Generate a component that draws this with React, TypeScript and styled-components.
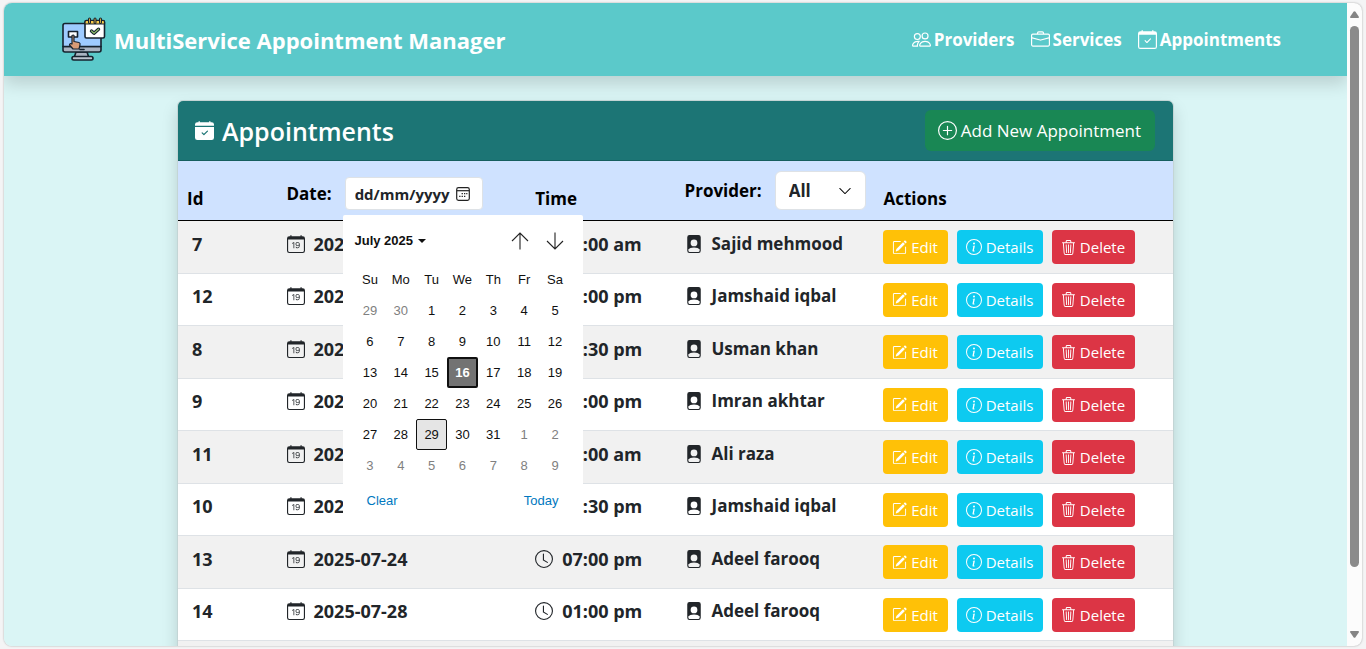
import React, { useState } from 'react';
import styled, { createGlobalStyle, css } from 'styled-components';
import {
  BsPeople,
  BsBriefcase,
  BsCalendarCheck,
  BsCalendarCheckFill,
  BsPlusCircle,
  BsCalendarDate,
  BsClock,
  BsFilePersonFill,
  BsPencilSquare,
  BsInfoCircle,
  BsTrash3,
  BsChevronDown,
} from 'react-icons/bs';

const uiFont = '"Open Sans", "Noto Sans", sans-serif';
const pickerFont = '"Liberation Sans", Arial, sans-serif';

const GlobalStyle = createGlobalStyle`
  *, *::before, *::after { box-sizing: border-box; }
  body {
    margin: 0;
    background: #f4f4f5;
    color: #212529;
    font-family: ${uiFont};
    font-size: 17px;
  }
  button, input, select { font: inherit; margin: 0; }
  a { color: inherit; text-decoration: none; }
`;

const Frame = styled.div`
  height: 100vh;
  padding: 3px 4px;
`;

const Window = styled.div`
  display: flex;
  height: 100%;
  overflow: hidden;
  border-radius: 8px;
  background: #fcfcfc;
  box-shadow: 0 0 2px rgba(0, 0, 0, 0.35);
`;

const Page = styled.div`
  flex: 1;
  min-width: 0;
  overflow-y: auto;
  scrollbar-width: none;
  background: #daf5f5;
`;

const ScrollRail = styled.div`
  display: flex;
  flex-direction: column;
  align-items: center;
  gap: 8px;
  width: 15px;
  padding: 8px 0;
`;

const ScrollThumb = styled.div`
  flex: 1;
  width: 9px;
  margin-bottom: 56px;
  border-radius: 5px;
  background: #8b8b8b;
`;

const Navbar = styled.header`
  display: flex;
  align-items: center;
  justify-content: space-between;
  height: 73px;
  padding: 0 66px 0 54px;
  background: #5bc9ca;
  color: #fff;
  box-shadow: 0 8px 16px rgba(0, 0, 0, 0.15);
`;

const Brand = styled.a`
  display: flex;
  align-items: center;
  gap: 8px;
  font-size: 22px;
  font-weight: 700;
`;

const Nav = styled.nav`
  display: flex;
  gap: 16px;
`;

const NavLink = styled.a`
  display: flex;
  align-items: center;
  gap: 3px;
  font-size: 17px;
  font-weight: 700;
  line-height: 24px;
`;

const Card = styled.main`
  width: 100%;
  max-width: 997px;
  margin: 24px auto;
  border: 1px solid #c3d5d5;
  border-radius: 6px;
  background: #fff;
  box-shadow: 0 8px 16px rgba(0, 0, 0, 0.15);
`;

const CardHeader = styled.div`
  display: flex;
  align-items: center;
  justify-content: space-between;
  height: 60px;
  padding: 0 18px 0 17px;
  border-bottom: 1px solid #165e5e;
  border-radius: 5px 5px 0 0;
  background: #1c7575;
  color: #fff;
`;

const CardTitle = styled.h1`
  display: flex;
  align-items: center;
  gap: 8px;
  margin: 0;
  font-size: 25px;
  font-weight: 600;
`;

const AddButton = styled.button`
  display: flex;
  align-items: center;
  gap: 4px;
  height: 41px;
  padding: 0 14px 0 13px;
  border: 0;
  border-radius: 6px;
  background: #198754;
  color: #fff;
  font-size: 17px;
`;

const Table = styled.table`
  width: 100%;
  table-layout: fixed;
  border-collapse: separate;
  border-spacing: 0;
`;

const HeadCell = styled.th<{ $width: number }>`
  width: ${(p) => p.$width}%;
  height: 60px;
  padding: 8px 8px 8px 9px;
  border-bottom: 1px solid #000;
  background: #cfe2ff;
  color: #000;
  font-weight: 700;
  line-height: 26px;
  text-align: left;
  vertical-align: bottom;
`;

const Filter = styled.div`
  position: relative;
  display: flex;
  align-items: center;
  gap: 13px;
  margin-bottom: 2px;
`;

const DateBox = styled.div`
  display: flex;
  align-items: center;
  width: 138px;
  height: 33px;
  padding: 0 12px 0 9px;
  border: 1px solid #dee2e6;
  border-radius: 4px;
  background: #fff;
`;

const DateInput = styled.input`
  width: 100%;
  min-width: 0;
  padding: 0;
  border: 0;
  outline: 0;
  background: transparent;
  font-size: 15px;
  font-weight: 700;
  &::placeholder { color: #212529; opacity: 1; }
`;

const PlainButton = styled.button`
  display: flex;
  align-items: center;
  justify-content: center;
  padding: 0;
  border: 0;
  background: transparent;
  color: inherit;
`;

const SelectBox = styled.div`
  position: relative;
  display: flex;
  svg {
    position: absolute;
    top: 13px;
    right: 14px;
    pointer-events: none;
  }
`;

const Select = styled.select`
  width: 91px;
  height: 39px;
  padding: 0 32px 0 13px;
  border: 1px solid #dee2e6;
  border-radius: 6px;
  appearance: none;
  background: #fff;
  color: #212529;
  font-weight: 700;
`;

const Row = styled.tr`
  height: 53px;
  &:nth-child(odd) { background: #f1f1f1; }
  &:nth-child(even) { height: 52px; }
`;

const Cell = styled.td`
  padding: 0 8px 7px 9px;
  border-bottom: 1px solid #dee2e6;
  font-weight: 700;
  white-space: nowrap;
`;

const NumberCell = styled(Cell)`
  font-size: 18px;
`;

const IdCell = styled(NumberCell)`
  padding-left: 14px;
`;

const ActionCell = styled(Cell)`
  padding: 0 8px;
`;

const FootCell = styled.td`
  height: 24px;
  padding: 0;
  background: #f1f1f1;
`;

const IconText = styled.span`
  display: flex;
  align-items: center;
  gap: 9px;
  line-height: 24px;
  svg { flex: none; }
`;

const Actions = styled.div`
  display: flex;
  gap: 9px;
`;

const tones = { edit: '#ffc107', details: '#0dcaf0', remove: '#dc3545' };

const ActionButton = styled.button<{ $tone: keyof typeof tones; $width: number }>`
  display: flex;
  align-items: center;
  justify-content: center;
  gap: 4px;
  width: ${(p) => p.$width}px;
  height: 34px;
  padding: 0;
  border: 0;
  border-radius: 4px;
  background: ${(p) => tones[p.$tone]};
  color: #fff;
  font-size: 15px;
  font-weight: 400;
`;

const Picker = styled.div`
  position: absolute;
  z-index: 2;
  top: 100%;
  left: 56px;
  width: 240px;
  height: 312px;
  margin-top: 5px;
  padding: 8px 12px;
  border-radius: 2px;
  background: #fff;
  color: #101010;
  font-family: ${pickerFont};
  font-size: 13px;
  font-weight: 400;
  line-height: 16px;
`;

const PickerHead = styled.div`
  display: flex;
  align-items: center;
  justify-content: space-between;
  height: 36px;
`;

const MonthButton = styled(PlainButton)`
  gap: 5px;
  font-weight: 700;
`;

const Arrows = styled.div`
  display: flex;
  gap: 17px;
  padding-right: 7px;
`;

const DayTable = styled.table`
  width: 100%;
  margin-top: 5px;
  table-layout: fixed;
  border-collapse: collapse;
`;

const WeekDay = styled.th`
  height: 31px;
  padding: 0;
  font-weight: 400;
  text-align: center;
`;

const DayCell = styled.td`
  height: 31px;
  padding: 0;
`;

const Day = styled(PlainButton)<{ $muted?: boolean; $state?: string }>`
  width: 100%;
  height: 31px;
  border-radius: 2px;
  color: ${(p) => (p.$muted ? '#808080' : '#101010')};
  ${(p) =>
    p.$state === 'today' &&
    css`
      border: 2px solid #101010;
      background: #737373;
      color: #fff;
      font-weight: 700;
    `}
  ${(p) =>
    p.$state === 'focused' &&
    css`
      border: 1px solid #101010;
      background: #e5e5e5;
    `}
`;

const PickerFoot = styled.div`
  display: flex;
  justify-content: space-between;
  padding: 12px;
  color: #0078c0;
`;

function Logo() {
  return (
    <svg width="48" height="48" viewBox="0 3 48 48" fill="none" stroke="#16222e" strokeWidth="1.6" strokeLinejoin="round" strokeLinecap="round" aria-hidden="true">
      <path d="M18 39h11l2 6H16z" fill="#aab4c2" />
      <rect x="14" y="43.500" width="21" height="3.500" rx="1.700" fill="#bcc4cf" />
      <path d="M5 33.500h38v3.500q0 2-2 2H7q-2 0-2-2z" fill="#aab4c2" />
      <path d="M5 33.500v-21q0-2 2-2h34q2 0 2 2v21z" fill="#9ecbff" />
      <path d="M22 36.500h4" />
      <path d="M10.500 18.500h9v5.500h-9z" fill="#fff" />
      <path d="M14 22.500q1.500-1 2 0v6l5 1q1.500.5 1 2.500l-1 4h-6l-3.500-4q0-2 2.500-1z" fill="#d99b76" strokeWidth="1.200" />
      <rect x="27" y="7.500" width="19.500" height="17.500" rx="1.500" fill="#fff" />
      <path d="M27 11V9q0-1.500 1.500-1.500h16.500q1.500 0 1.500 1.500v2z" fill="#f7c94b" strokeWidth="1.200" />
      <path d="M31.500 6v3.500M37 6v3.500M42.500 6v3.500" strokeWidth="3" />
      <path d="M31.500 6v3.500M37 6v3.500M42.500 6v3.500" stroke="#f7c94b" strokeWidth="0.800" />
      <path d="M33.500 18l2.500 2.200 4.500-4" strokeWidth="3.400" />
      <path d="M33.500 18l2.500 2.200 4.500-4" stroke="#8dbb6b" strokeWidth="1.200" />
    </svg>
  );
}

function ScrollArrow({ down }: { down?: boolean }) {
  return (
    <svg width="9" height="7" viewBox="0 0 9 7" fill="#858585" aria-hidden="true">
      <path d={down ? 'M1 0h7q1.500.2.700 1.500L5.500 6.200q-1 1.200-2 0L.3 1.500Q-.5.200 1 0z' : 'M1 7h7q1.500-.2.700-1.500L5.500.800q-1-1.200-2 0L.3 5.500Q-.5 6.800 1 7z'} />
    </svg>
  );
}

function PickerIcon() {
  return (
    <svg width="14" height="14" viewBox="0 0 14 14" fill="none" stroke="#222" strokeWidth="1.200" aria-hidden="true">
      <rect x="0.700" y="0.700" width="12.600" height="12.600" rx="1.800" />
      <path d="M1 3.700h12" />
      <path d="M5.600 6.600h1.300M8 6.600h1.300M10.200 6.600h1.200M3.200 9.400h1.300M5.600 9.400h1.300M8 9.400h1.300" strokeWidth="1.400" />
    </svg>
  );
}

function MonthArrow({ down }: { down?: boolean }) {
  return (
    <svg width="18" height="18" viewBox="0 0 18 18" fill="none" stroke="#222" strokeWidth="1.100" aria-hidden="true">
      <path d={down ? 'M9 .500v16.500M1 9l8 8 8-8' : 'M9 17.500V1M1 9l8-8 8 8'} />
    </svg>
  );
}

const weekDays = ['Su', 'Mo', 'Tu', 'We', 'Th', 'Fr', 'Sa'];

/* July 2025 starts on a Tuesday, so the grid opens two days earlier. */
const weeks = Array.from({ length: 6 }, (_, w) =>
  Array.from({ length: 7 }, (_, d) => {
    const date = new Date(2025, 5, 29 + w * 7 + d);
    return { day: date.getDate(), inMonth: date.getMonth() === 6 };
  }),
);

function DatePicker() {
  return (
    <Picker role="dialog" aria-label="Choose date">
      <PickerHead>
        <MonthButton type="button">
          July 2025
          <svg width="8" height="4" viewBox="0 0 8 4" fill="#101010" aria-hidden="true">
            <path d="M0 0h8L4 4z" />
          </svg>
        </MonthButton>
        <Arrows>
          <PlainButton type="button" aria-label="Previous month"><MonthArrow /></PlainButton>
          <PlainButton type="button" aria-label="Next month"><MonthArrow down /></PlainButton>
        </Arrows>
      </PickerHead>
      <DayTable>
        <thead>
          <tr>{weekDays.map((d) => <WeekDay key={d} scope="col">{d}</WeekDay>)}</tr>
        </thead>
        <tbody>
          {weeks.map((week, w) => (
            <tr key={w}>
              {week.map(({ day, inMonth }) => (
                <DayCell key={day}>
                  <Day
                    type="button"
                    $muted={!inMonth}
                    $state={inMonth && day === 16 ? 'today' : inMonth && day === 29 ? 'focused' : undefined}
                  >
                    {day}
                  </Day>
                </DayCell>
              ))}
            </tr>
          ))}
        </tbody>
      </DayTable>
      <PickerFoot>
        <PlainButton type="button">Clear</PlainButton>
        <PlainButton type="button">Today</PlainButton>
      </PickerFoot>
    </Picker>
  );
}

const appointments = [
  { id: 7, date: '2025-07-16', time: '10:00 am', provider: 'Sajid mehmood' },
  { id: 12, date: '2025-07-17', time: '02:00 pm', provider: 'Jamshaid iqbal' },
  { id: 8, date: '2025-07-18', time: '03:30 pm', provider: 'Usman khan' },
  { id: 9, date: '2025-07-19', time: '05:00 pm', provider: 'Imran akhtar' },
  { id: 11, date: '2025-07-21', time: '11:00 am', provider: 'Ali raza' },
  { id: 10, date: '2025-07-22', time: '04:30 pm', provider: 'Jamshaid iqbal' },
  { id: 13, date: '2025-07-24', time: '07:00 pm', provider: 'Adeel farooq' },
  { id: 14, date: '2025-07-28', time: '01:00 pm', provider: 'Adeel farooq' },
];

export default function App() {
  const [date, setDate] = useState('');
  return (
    <>
      <GlobalStyle />
      <Frame>
        <Window>
          <Page>
            <Navbar>
              <Brand href="#home"><Logo />MultiService Appointment Manager</Brand>
              <Nav>
                <NavLink href="#providers"><BsPeople size={19} />Providers</NavLink>
                <NavLink href="#services"><BsBriefcase size={19} />Services</NavLink>
                <NavLink href="#appointments"><BsCalendarCheck size={19} />Appointments</NavLink>
              </Nav>
            </Navbar>
            <Card>
              <CardHeader>
                <CardTitle><BsCalendarCheckFill size={19} />Appointments</CardTitle>
                <AddButton type="button"><BsPlusCircle size={19} />Add New Appointment</AddButton>
              </CardHeader>
              <Table>
                <thead>
                  <tr>
                    <HeadCell scope="col" $width={10}>Id</HeadCell>
                    <HeadCell scope="col" $width={25}>
                      <Filter>
                        <label htmlFor="date">Date:</label>
                        <DateBox>
                          <DateInput
                            id="date"
                            placeholder="dd/mm/yyyy"
                            value={date}
                            onChange={(e) => setDate(e.target.value)}
                          />
                          <PlainButton type="button" aria-label="Open calendar"><PickerIcon /></PlainButton>
                        </DateBox>
                        <DatePicker />
                      </Filter>
                    </HeadCell>
                    <HeadCell scope="col" $width={15}>Time</HeadCell>
                    <HeadCell scope="col" $width={20}>
                      <Filter>
                        <label htmlFor="provider">Provider:</label>
                        <SelectBox>
                          <Select id="provider" defaultValue="All">
                            <option>All</option>
                          </Select>
                          <BsChevronDown size={14} />
                        </SelectBox>
                      </Filter>
                    </HeadCell>
                    <HeadCell scope="col" $width={30}>Actions</HeadCell>
                  </tr>
                </thead>
                <tbody>
                  {appointments.map((a) => (
                    <Row key={a.id}>
                      <IdCell>{a.id}</IdCell>
                      <NumberCell><IconText><BsCalendarDate size={18} />{a.date}</IconText></NumberCell>
                      <NumberCell><IconText><BsClock size={18} />{a.time}</IconText></NumberCell>
                      <Cell><IconText><BsFilePersonFill size={18} />{a.provider}</IconText></Cell>
                      <ActionCell>
                        <Actions>
                          <ActionButton type="button" $tone="edit" $width={65}><BsPencilSquare size={15} />Edit</ActionButton>
                          <ActionButton type="button" $tone="details" $width={86}><BsInfoCircle size={16} />Details</ActionButton>
                          <ActionButton type="button" $tone="remove" $width={83}><BsTrash3 size={15} />Delete</ActionButton>
                        </Actions>
                      </ActionCell>
                    </Row>
                  ))}
                </tbody>
                <tfoot>
                  <tr><FootCell colSpan={5} /></tr>
                </tfoot>
              </Table>
            </Card>
          </Page>
          <ScrollRail aria-hidden="true">
            <ScrollArrow />
            <ScrollThumb />
            <ScrollArrow down />
          </ScrollRail>
        </Window>
      </Frame>
    </>
  );
}
